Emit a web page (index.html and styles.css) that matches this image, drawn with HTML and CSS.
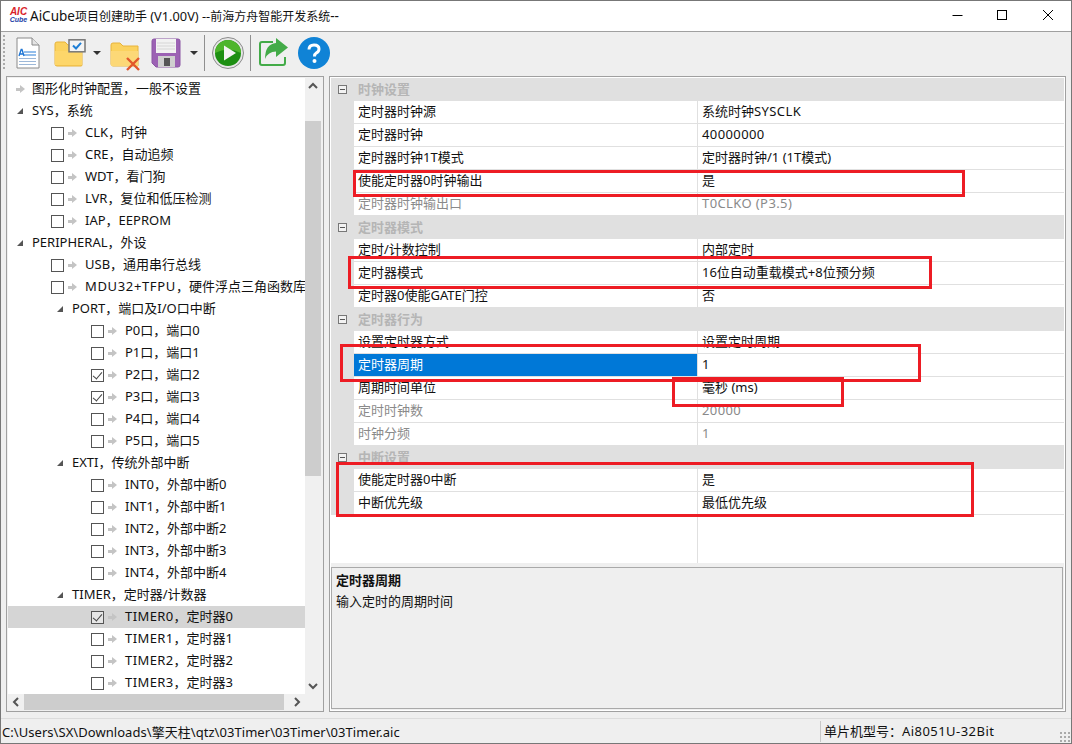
FILE: index.html
```html
<!DOCTYPE html>
<html lang="zh">
<head>
<meta charset="utf-8">
<title>AiCube</title>
<link rel="stylesheet" href="styles.css">
</head>
<body>
<div class="window">
  <header class="titlebar">
    <div class="logo"><span class="logo-top">AIC</span><span class="logo-bot">Cube</span></div>
    <div class="title">AiCube<span class="cjk">项目创建助手</span><span class="ver"> (V1.00V) --</span><span class="cjk">前海方舟智能开发系统</span>--</div>
    <div class="winbtns">
      <svg class="winbtn" viewBox="0 0 12 12"><path d="M0.5 6.5H10.5" stroke="#000" fill="none"/></svg>
      <svg class="winbtn" viewBox="0 0 12 12"><rect x="0.5" y="1.5" width="9" height="9" stroke="#000" fill="none"/></svg>
      <svg class="winbtn" viewBox="0 0 12 12"><path d="M1 1L11 11M11 1L1 11" stroke="#000" fill="none"/></svg>
    </div>
  </header>
  <div class="toolbar">
    <div class="grip"></div>
    <svg class="tool t-doc" viewBox="0 0 24 32"><path d="M1 1H16L23 8V31H1Z" fill="#fff" stroke="#8a8a8a"/><path d="M16 1V8H23" fill="#e4e4e4" stroke="#8a8a8a"/><path d="M8 15H20M8 18H20" stroke="#2b7fd8" stroke-width="1.2"/><path d="M3 21.5H20M3 24.5H20M3 27.5H20" stroke="#9db8d8" stroke-width="1.2"/><path d="M3 19L5.2 12.5H6L8 19M4 17H7.2" stroke="#1c74d4" stroke-width="1.3" fill="none"/></svg>
    <svg class="tool t-folder" viewBox="0 0 32 28"><path d="M1 5Q1 3 3 3H11L14 6H28V26Q28 27 27 27H3Q1 27 1 25Z" fill="#fbd25f" stroke="#e8b33a"/><path d="M1 12H28V26H1Z" fill="#fdd66a"/><rect x="15" y="0.8" width="16" height="12" fill="#f4f4f4" stroke="#777" stroke-width="1.5"/><path d="M19 6.5L22 9.5L27 3.8" stroke="#1f7fd6" stroke-width="2" fill="none"/></svg>
    <span class="caret c1"></span>
    <svg class="tool t-folderx" viewBox="0 0 32 32"><path d="M1 6Q1 4 3 4H10L13 7H28V27H3Q1 27 1 25Z" fill="#fbd25f" stroke="#e8b33a"/><path d="M1 12H28V27H1Z" fill="#fcd877"/><path d="M17 19L29 31M29 19L17 31" stroke="#e2572c" stroke-width="2.4"/></svg>
    <svg class="tool t-floppy" viewBox="0 0 30 30"><path d="M1 3Q1 1 3 1H27Q29 1 29 3V27Q29 29 27 29H5L1 25Z" fill="#9c62b4" stroke="#8b56a4"/><rect x="5" y="1" width="20" height="14" fill="#f2f2f2"/><path d="M6 5H24M6 8H24M6 11H24" stroke="#d6d6d6"/><rect x="7" y="18" width="17" height="11" fill="#cfcfcf"/><rect x="13" y="20" width="6" height="8" fill="#555"/></svg>
    <span class="caret c2"></span>
    <span class="sep s1"></span>
    <svg class="tool t-play" viewBox="0 0 32 32"><circle cx="16" cy="16" r="15.5" fill="#e6e6e6" stroke="#8c8c8c"/><circle cx="16" cy="16" r="13" fill="#1d8f12"/><path d="M3 16A13 13 0 0 1 29 16Q16 9 3 16Z" fill="#4eb52c"/><path d="M12 8.5V23.5L24 16Z" fill="#f4f4f4"/></svg>
    <span class="sep s2"></span>
    <svg class="tool t-share" viewBox="0 0 30 30"><path d="M14 5H3Q1 5 1 7V26Q1 28 3 28H24Q26 28 26 26V20" fill="none" stroke="#43ab48" stroke-width="2"/><path d="M17 1L29 10.500L17 20V14.500Q9 14.500 6 22Q6 7 17 6Z" fill="#43ab48"/></svg>
    <svg class="tool t-help" viewBox="0 0 32 32"><circle cx="16" cy="16" r="16" fill="#1083d6"/><path d="M11 12.500Q11 8 16 8Q21 8 21 12Q21 14.500 18.500 15.800Q16.500 17 16.500 19.500" fill="none" stroke="#fff" stroke-width="3"/><circle cx="16.500" cy="24" r="2" fill="#fff"/></svg>
  </div>
  <main class="main">
    <section class="tree">
      <div class="tree-rows">
        <div class="node l0"><i class="arrow"></i><span>图形化时钟配置，一般不设置</span></div>
        <div class="node l0"><i class="tri"></i><span>SYS，系统</span></div>
        <div class="node l1"><i class="cb"></i><i class="arrow"></i><span>CLK，时钟</span></div>
        <div class="node l1"><i class="cb"></i><i class="arrow"></i><span>CRE，自动追频</span></div>
        <div class="node l1"><i class="cb"></i><i class="arrow"></i><span>WDT，看门狗</span></div>
        <div class="node l1"><i class="cb"></i><i class="arrow"></i><span>LVR，复位和低压检测</span></div>
        <div class="node l1"><i class="cb"></i><i class="arrow"></i><span>IAP，EEPROM</span></div>
        <div class="node l0"><i class="tri"></i><span>PERIPHERAL，外设</span></div>
        <div class="node l1"><i class="cb"></i><i class="arrow"></i><span>USB，通用串行总线</span></div>
        <div class="node l1"><i class="cb"></i><i class="arrow"></i><span><b class="lat wide">MDU32+TFPU</b>，硬件浮点三角函数库</span></div>
        <div class="node g1"><i class="tri"></i><span>PORT，端口及I/O口中断</span></div>
        <div class="node l2"><i class="cb"></i><i class="arrow"></i><span>P0口，端口0</span></div>
        <div class="node l2"><i class="cb"></i><i class="arrow"></i><span>P1口，端口1</span></div>
        <div class="node l2"><i class="cb on"></i><i class="arrow"></i><span>P2口，端口2</span></div>
        <div class="node l2"><i class="cb on"></i><i class="arrow"></i><span>P3口，端口3</span></div>
        <div class="node l2"><i class="cb"></i><i class="arrow"></i><span>P4口，端口4</span></div>
        <div class="node l2"><i class="cb"></i><i class="arrow"></i><span>P5口，端口5</span></div>
        <div class="node g1"><i class="tri"></i><span>EXTI，传统外部中断</span></div>
        <div class="node l2"><i class="cb"></i><i class="arrow"></i><span>INT0，外部中断0</span></div>
        <div class="node l2"><i class="cb"></i><i class="arrow"></i><span>INT1，外部中断1</span></div>
        <div class="node l2"><i class="cb"></i><i class="arrow"></i><span>INT2，外部中断2</span></div>
        <div class="node l2"><i class="cb"></i><i class="arrow"></i><span>INT3，外部中断3</span></div>
        <div class="node l2"><i class="cb"></i><i class="arrow"></i><span>INT4，外部中断4</span></div>
        <div class="node g1"><i class="tri"></i><span>TIMER，定时器/计数器</span></div>
        <div class="node l2 selected"><i class="cb on"></i><i class="arrow"></i><span><b class="lat">TIMER0</b>，定时器0</span></div>
        <div class="node l2"><i class="cb"></i><i class="arrow"></i><span><b class="lat">TIMER1</b>，定时器1</span></div>
        <div class="node l2"><i class="cb"></i><i class="arrow"></i><span><b class="lat">TIMER2</b>，定时器2</span></div>
        <div class="node l2"><i class="cb"></i><i class="arrow"></i><span><b class="lat">TIMER3</b>，定时器3</span></div>
      </div>
      <div class="vscroll">
        <svg class="sb-btn" viewBox="0 0 16 16"><path d="M4 10L8 6L12 10" fill="none" stroke="#555" stroke-width="2"/></svg>
        <div class="vtrack"><div class="vthumb"></div></div>
        <svg class="sb-btn" viewBox="0 0 16 16"><path d="M4 6L8 10L12 6" fill="none" stroke="#555" stroke-width="2"/></svg>
      </div>
      <div class="hscroll">
        <svg class="sb-btn" viewBox="0 0 16 16"><path d="M10 4L6 8L10 12" fill="none" stroke="#555" stroke-width="2"/></svg>
        <div class="htrack"><div class="hthumb"></div></div>
        <svg class="sb-btn" viewBox="0 0 16 16"><path d="M6 4L10 8L6 12" fill="none" stroke="#555" stroke-width="2"/></svg>
      </div>
    </section>
    <section class="props">
      <div class="grid">
        <div class="group"><i class="minus"></i><span>时钟设置</span></div>
        <div class="row"><div class="k">定时器时钟源</div><div class="v">系统时钟<b class="lat">SYSCLK</b></div></div>
        <div class="row"><div class="k">定时器时钟</div><div class="v"><b class="lat">40000000</b></div></div>
        <div class="row"><div class="k">定时器时钟1T模式</div><div class="v">定时器时钟/1 (1T模式)</div></div>
        <div class="row"><div class="k">使能定时器0时钟输出</div><div class="v">是</div></div>
        <div class="row off"><div class="k">定时器时钟输出口</div><div class="v"><b class="lat">T0CLKO (P3.5)</b></div></div>
        <div class="group"><i class="minus"></i><span>定时器模式</span></div>
        <div class="row"><div class="k">定时/计数控制</div><div class="v">内部定时</div></div>
        <div class="row"><div class="k">定时器模式</div><div class="v">16位自动重载模式+8位预分频</div></div>
        <div class="row"><div class="k">定时器0使能GATE门控</div><div class="v">否</div></div>
        <div class="group"><i class="minus"></i><span>定时器行为</span></div>
        <div class="row"><div class="k">设置定时器方式</div><div class="v">设置定时周期</div></div>
        <div class="row sel"><div class="k">定时器周期</div><div class="v">1</div></div>
        <div class="row"><div class="k">周期时间单位</div><div class="v">毫秒 (ms)</div></div>
        <div class="row off"><div class="k">定时时钟数</div><div class="v"><b class="lat">20000</b></div></div>
        <div class="row off"><div class="k">时钟分频</div><div class="v">1</div></div>
        <div class="group"><i class="minus"></i><span>中断设置</span></div>
        <div class="row"><div class="k">使能定时器0中断</div><div class="v">是</div></div>
        <div class="row"><div class="k">中断优先级</div><div class="v">最低优先级</div></div>
        <div class="filler"></div>
      </div>
      <div class="desc">
        <div class="desc-title">定时器周期</div>
        <div class="desc-text">输入定时的周期时间</div>
      </div>
    </section>
    <div class="mark m1"></div>
    <div class="mark m2"></div>
    <div class="mark m3"></div>
    <div class="mark m4"></div>
    <div class="mark m5"></div>
  </main>
  <footer class="status">
    <div class="path">C:\Users\SX\Downloads\擎天柱\qtz\03Timer\03Timer\03Timer.aic</div>
    <div class="chip">单片机型号：<span class="model">Ai8051U-32Bit</span></div>
    <div class="resize"></div>
  </footer>
</div>
</body>
</html>
```
FILE: styles.css
```css
* { box-sizing: border-box; }
html, body { margin: 0; padding: 0; }
body {
  width: 1072px;
  height: 744px;
  overflow: hidden;
  font-family: "Noto Sans", "Noto Sans CJK SC", sans-serif;
  font-size: 13px;
  color: #111;
}
.window {
  width: 1072px;
  height: 744px;
  display: flex;
  flex-direction: column;
  border: 1px solid #777;
  background: #efefef;
}
.titlebar {
  height: 31px;
  flex: none;
  display: flex;
  align-items: center;
  background: #fff;
  border-bottom: 1px solid #a0a0a0;
  padding-left: 7px;
}
.logo { width: 21px; flex: none; display: flex; flex-direction: column; align-items: center; font-family: "Liberation Sans", sans-serif; font-weight: 700; font-style: italic; line-height: 8px; margin-top: -1px; }
.logo-top { font-size: 10px; color: #d8232a; }
.logo-bot { font-size: 7px; color: #1c3fa8; }
.title { font-size: 13.5px; white-space: nowrap; margin-top: -1px; margin-left: 1px; }
.title .cjk { font-size: 12px; }
.title .ver { font-size: 12.8px; }
.winbtns { margin-left: auto; margin-right: 17px; margin-top: -2px; display: flex; gap: 33px; }
.winbtn { width: 12px; height: 12px; flex: none; }

.toolbar { height: 44px; flex: none; position: relative; display: flex; align-items: center; }
.grip { position: absolute; left: 2px; top: 3px; width: 2px; height: 36px; background: repeating-linear-gradient(to bottom, #aaa 0 2px, transparent 2px 4px); }
.tool { position: absolute; }
.t-doc { left: 15px; top: 5px; width: 24px; height: 32px; }
.t-folder { left: 53px; top: 7px; width: 32px; height: 28px; }
.t-folderx { left: 109px; top: 7px; width: 32px; height: 32px; }
.t-floppy { left: 150px; top: 6px; width: 30px; height: 30px; }
.t-play { left: 211px; top: 5px; width: 32px; height: 32px; }
.t-share { left: 258px; top: 5px; width: 30px; height: 30px; }
.t-help { left: 297px; top: 5px; width: 32px; height: 32px; }
.caret { position: absolute; top: 19px; width: 0; height: 0; border: 4px solid transparent; border-top: 4px solid #333; border-bottom: 0; }
.c1 { left: 92px; }
.c2 { left: 189px; }
.sep { position: absolute; top: 3px; width: 1px; height: 36px; background: #8f8f8f; }
.s1 { left: 203px; }
.s2 { left: 249px; }

.lat { font-weight: 400; letter-spacing: 0.4px; }
.lat.wide { letter-spacing: 0.65px; }

.main { flex: 1; display: flex; position: relative; padding: 0 5px 6px; gap: 5px; min-height: 0; }
.tree {
  width: 318px;
  flex: none;
  border: 1px solid #a0a0a0;
  background: #f0f0f0;
  position: relative;
  padding: 1px 0 0 1px;
  display: grid;
  grid-template-columns: 297px 17px;
  grid-template-rows: 616px 17px;
}
.tree-rows { overflow: hidden; background: #fff; }
.node { height: 22px; display: flex; align-items: center; white-space: nowrap; }
.node span { line-height: 20px; padding-bottom: 2px; }
.l0 { padding-left: 8px; }
.l1 { padding-left: 43px; }
.g1 { padding-left: 48px; }
.l2 { padding-left: 83px; }
.selected { background: #d5d5d5; }
.cb { width: 13px; height: 13px; border: 1px solid #555; background: #fff; flex: none; margin-right: 4px; position: relative; }
.cb.on::after { content: ""; position: absolute; left: 3px; top: 0; width: 4px; height: 8px; border: solid #444; border-width: 0 1.5px 1.5px 0; transform: rotate(40deg); }
.selected .cb { background: #e6e6e6; }
.arrow { width: 9px; height: 9px; flex: none; position: relative; margin-right: 8px; }
.l0 .arrow { margin-right: 7px; }
.arrow::before { content: ""; position: absolute; left: 0; top: 3px; width: 5px; height: 3px; background: #c4c4c4; }
.arrow::after { content: ""; position: absolute; left: 4px; top: 0; border: 4.5px solid transparent; border-left: 5px solid #c4c4c4; border-right: 0; }
.tri { width: 16px; height: 9px; flex: none; position: relative; }
.tri::after { content: ""; position: absolute; left: 1px; top: 1px; border-style: solid; border-width: 0 0 6px 6px; border-color: transparent transparent #555 transparent; }

.vscroll { grid-column: 2; grid-row: 1; display: flex; flex-direction: column; background: #f0f0f0; }
.hscroll { grid-column: 1; grid-row: 2; display: flex; background: #f0f0f0; }
.sb-btn { width: 16px; height: 16px; flex: none; }
.vtrack { flex: 1; padding-top: 27px; }
.vthumb { height: 355px; width: 16px; background: #cdcdcd; }
.htrack { flex: 1; }
.hthumb { width: 260px; height: 16px; background: #cdcdcd; }

.props {
  flex: 1;
  border: 1px solid #a0a0a0;
  padding: 1px 1px 2px 1px;
  display: flex;
  flex-direction: column;
  gap: 4px;
  box-shadow: inset 0 0 0 1px #fff;
}
.grid { height: 485px; flex: none; background: #fff; display: flex; flex-direction: column; }
.group { height: 23px; flex: none; background: #e0e0e0; display: flex; align-items: center; color: #b5b5b5; font-weight: 700; padding-left: 7px; }
.group span { line-height: 20px; padding-bottom: 2px; }
.minus { width: 9px; height: 9px; border: 1px solid #777; background: #f2f2f2; position: relative; margin-right: 11px; flex: none; }
.minus::after { content: ""; position: absolute; left: 1px; top: 3px; width: 5px; height: 1px; background: #555; }
.row { height: 23px; flex: none; display: flex; border-left: 23px solid #e0e0e0; }
.k { width: 344px; flex: none; padding-left: 4px; line-height: 20px; border-bottom: 1px solid #e0e0e0; border-right: 1px solid #e0e0e0; white-space: nowrap; }
.v { flex: 1; padding-left: 4px; line-height: 20px; border-bottom: 1px solid #e0e0e0; white-space: nowrap; }
.off { color: #8a8a8a; }
.sel .k { background: #0078d7; color: #fff; }
.filler { flex: 1; margin-left: 366px; border-left: 1px solid #e0e0e0; }
.desc { flex: 1; margin-right: 1px; border: 1px solid #a9a9a9; padding: 2px 4px; background: #efefef; line-height: 21px; }
.desc-title { font-weight: 700; }

.mark { position: absolute; border: 3px solid #ed1c24; pointer-events: none; }
.m1 { left: 352px; top: 94px; width: 612px; height: 27px; }
.m2 { left: 347px; top: 180px; width: 584px; height: 33px; }
.m3 { left: 339px; top: 268px; width: 581px; height: 38px; }
.m4 { left: 671px; top: 301px; width: 172px; height: 30px; }
.m5 { left: 335px; top: 386px; width: 638px; height: 55px; }

.status { height: 25px; flex: none; border-top: 1px solid #dcdcdc; display: flex; align-items: center; position: relative; background: #efefef; }
.path { width: 819px; flex: none; padding-left: 1px; white-space: nowrap; overflow: hidden; letter-spacing: 0.05px; }
.chip { border-left: 1px solid #c8c8c8; padding-left: 3px; height: 21px; line-height: 21px; white-space: nowrap; }
.model { letter-spacing: 0.45px; }
.resize { position: absolute; right: 1px; bottom: 1px; width: 10px; height: 10px; background: radial-gradient(circle at 1px 1px, #aaa 1px, transparent 1.2px) 0 0 / 4px 4px; }
```
